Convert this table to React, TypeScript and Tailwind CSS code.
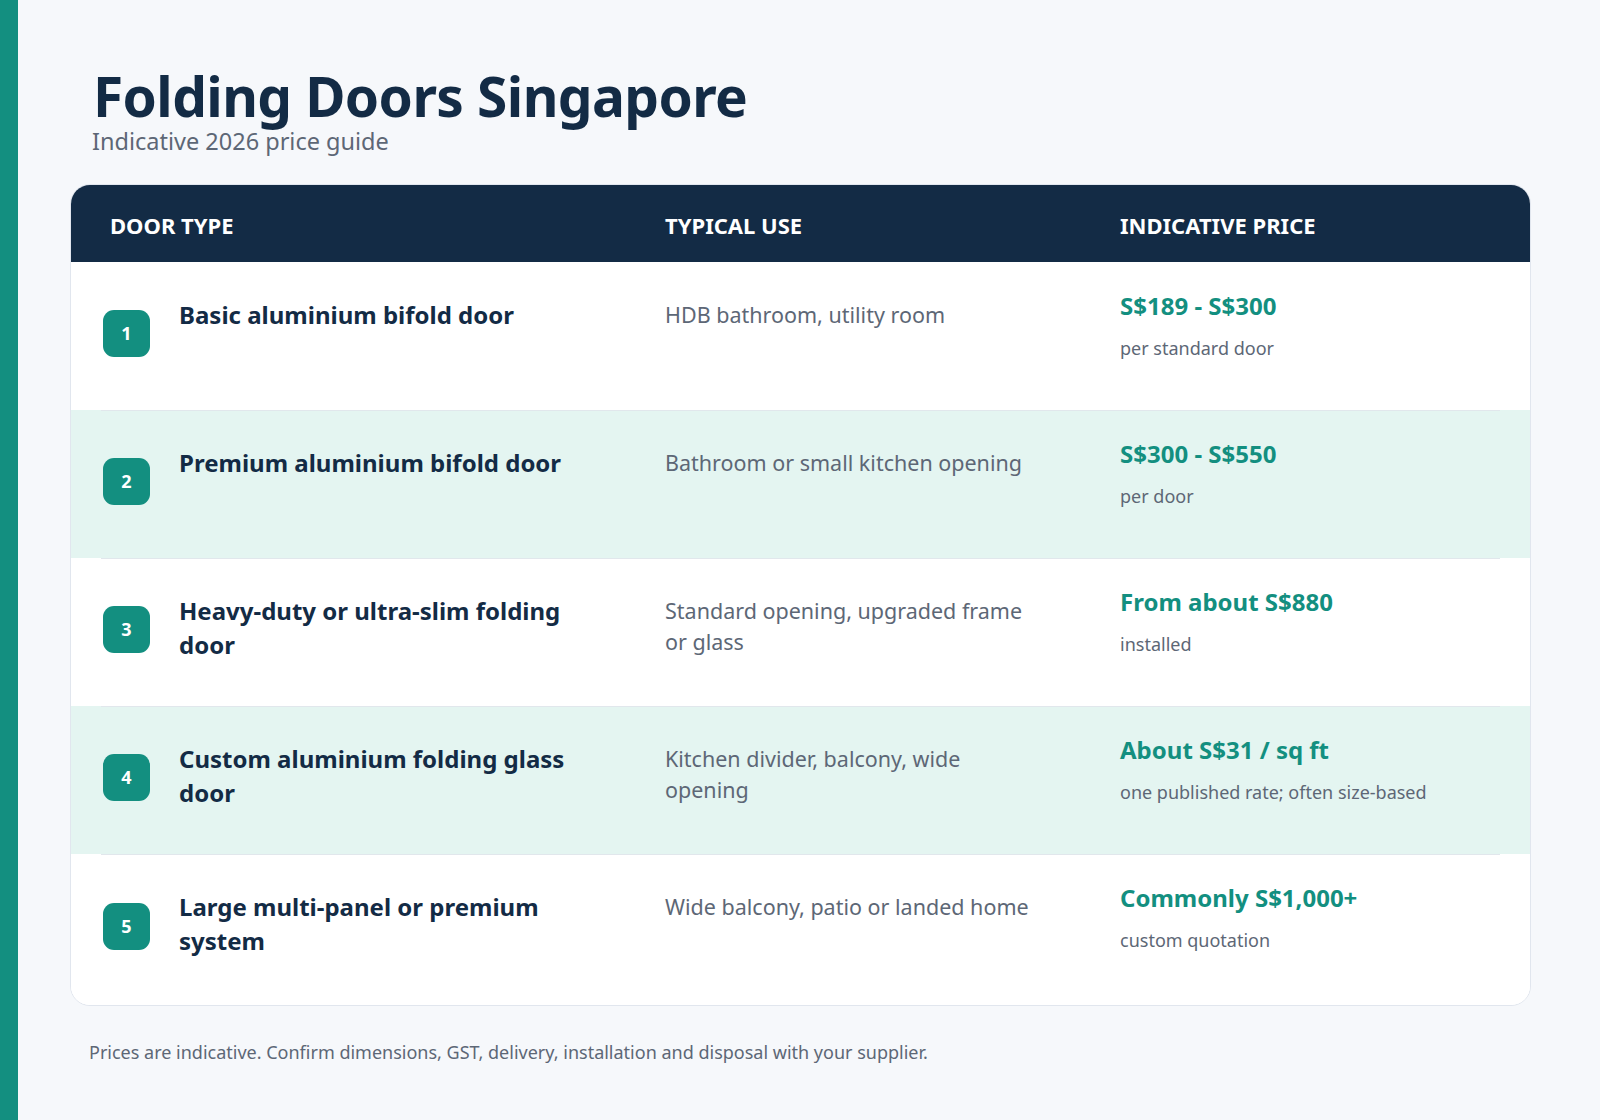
import React from "react";

interface DoorRow {
  id: number;
  name: string;
  use: string;
  price: string;
  note: string;
}

const rows: DoorRow[] = [
  {
    id: 1,
    name: "Basic aluminium bifold door",
    use: "HDB bathroom, utility room",
    price: "S$189 - S$300",
    note: "per standard door",
  },
  {
    id: 2,
    name: "Premium aluminium bifold door",
    use: "Bathroom or small kitchen opening",
    price: "S$300 - S$550",
    note: "per door",
  },
  {
    id: 3,
    name: "Heavy-duty or ultra-slim folding door",
    use: "Standard opening, upgraded frame or glass",
    price: "From about S$880",
    note: "installed",
  },
  {
    id: 4,
    name: "Custom aluminium folding glass door",
    use: "Kitchen divider, balcony, wide opening",
    price: "About S$31 / sq ft",
    note: "one published rate; often size-based",
  },
  {
    id: 5,
    name: "Large multi-panel or premium system",
    use: "Wide balcony, patio or landed home",
    price: "Commonly S$1,000+",
    note: "custom quotation",
  },
];

export default function App() {
  return (
    <div
      className="flex w-[1600px] h-[1120px] bg-[#f6f8fb] overflow-hidden"
      style={{ fontFamily: '"Noto Sans", "Open Sans", sans-serif' }}
    >
      {/* accent bar */}
      <div className="w-[18px] shrink-0 bg-[#138f80]" />

      <div className="flex-1 pl-[52px] pr-[69px] pt-[66px]">
        <h1 className="ml-[23px] text-[55px] leading-[60px] font-bold tracking-[-0.6px] text-[#132b45]">
          Folding Doors Singapore
        </h1>
        <p className="ml-[22px] text-[23.5px] leading-[30px] text-[#5d6776]">
          Indicative 2026 price guide
        </p>

        {/* price table */}
        <div className="mt-[28px] rounded-[20px] border border-[#e1e6ee] bg-white overflow-hidden">
          <div className="grid grid-cols-[594px_455px_1fr] h-[77px] pt-[3px] items-center bg-[#132b45] text-white text-[22px] font-bold">
            <div className="pl-[39px]">DOOR TYPE</div>
            <div>TYPICAL USE</div>
            <div>INDICATIVE PRICE</div>
          </div>

          {rows.map((r, i) => (
            <div
              key={r.id}
              className={`relative grid grid-cols-[594px_455px_1fr] ${
                i === rows.length - 1 ? "h-[151px]" : "h-[148px]"
              } ${i % 2 === 1 ? "bg-[#e4f5f1]" : "bg-white"}`}
            >
              {i > 0 && (
                <div className="absolute top-0 left-[30px] right-[30px] h-px bg-[#e1e7ec]" />
              )}
              <div className="flex pl-[32px]">
                <div className="self-center mt-[-6px] w-[47px] h-[47px] rounded-[11px] bg-[#138f80] text-white text-[18px] font-bold flex items-center justify-center">
                  {r.id}
                </div>
                <div className="ml-[29px] pt-[36px] max-w-[410px] text-[24px] leading-[34px] font-bold text-[#132b45]">
                  {r.name}
                </div>
              </div>
              <div className="pt-[37px] max-w-[372px] text-[21.5px] leading-[31px] text-[#5d6776]">
                {r.use}
              </div>
              <div className="pt-[27px]">
                <div className="text-[24px] leading-[34px] font-bold text-[#138f80]">
                  {r.price}
                </div>
                <div className="mt-[13px] text-[18px] leading-[24px] text-[#5d6776]">
                  {r.note}
                </div>
              </div>
            </div>
          ))}
        </div>

        <p className="mt-[34px] ml-[19px] text-[18px] leading-[24px] text-[#5d6776]">
          Prices are indicative. Confirm dimensions, GST, delivery, installation and disposal with your supplier.
        </p>
      </div>
    </div>
  );
}
